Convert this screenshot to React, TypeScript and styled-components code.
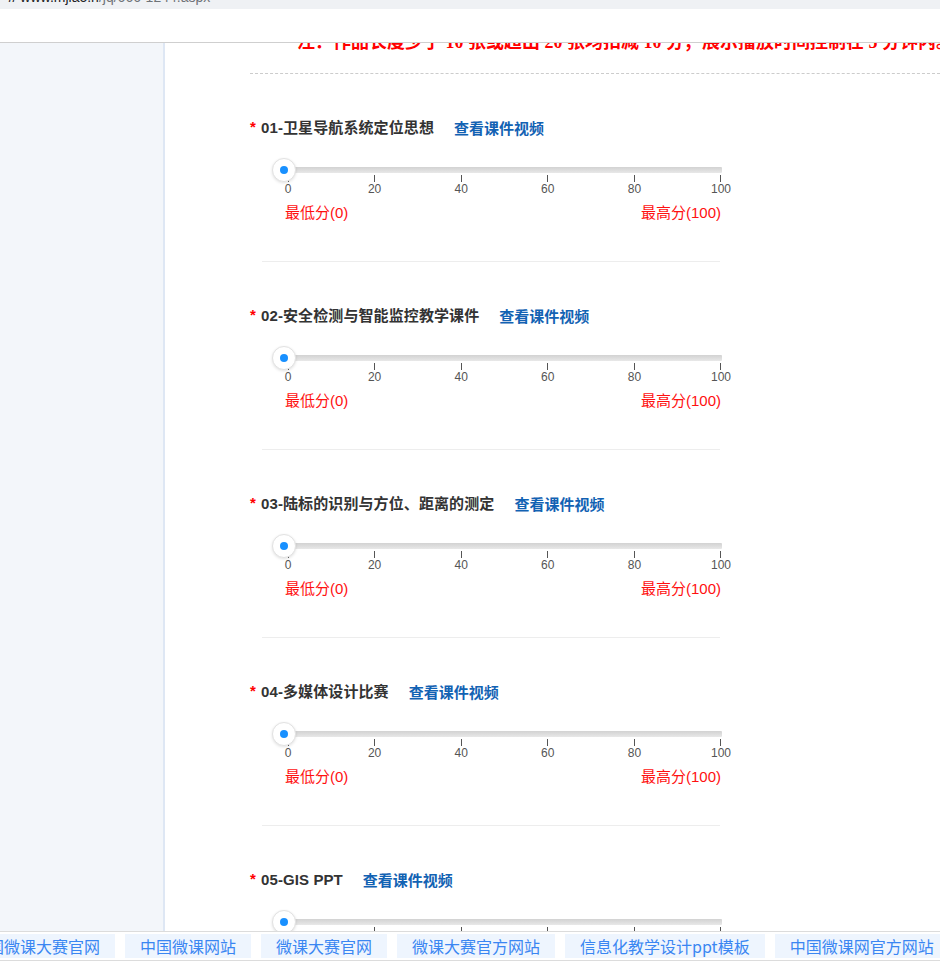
import React from "react";
import styled, { createGlobalStyle } from "styled-components";

const GlobalStyle = createGlobalStyle`
  html, body {
    margin: 0;
    padding: 0;
    background: #fff;
  }
  body {
    font-family: "Liberation Sans", "Noto Sans CJK SC", sans-serif;
    overflow: hidden;
  }
`;

const Page = styled.div`
  height: 968px;
  display: flex;
  flex-direction: column;
  overflow: hidden;
`;

const AddressStrip = styled.div`
  height: 9px;
  background: #eff1f4;
  overflow: hidden;
  font-size: 14px;
  line-height: 16px;
  white-space: nowrap;
`;

const AddressText = styled.div`
  margin-top: -11px;
  padding-left: 4px;
`;

const Domain = styled.span`
  color: #202124;
`;

const UrlPath = styled.span`
  color: #6f7378;
`;

const HeaderBar = styled.div`
  height: 33px;
  background: #fff;
  border-bottom: 1px solid #cfcfcf;
  flex-shrink: 0;
`;

const Body = styled.div`
  flex: 1;
  display: flex;
  min-height: 0;
`;

const Sidebar = styled.aside`
  width: 163px;
  flex-shrink: 0;
  background: #f3f6fa;
  border-right: 2px solid #dee7f4;
`;

const Main = styled.main`
  flex: 1;
  overflow: hidden;
  padding-left: 85px;
`;

const Notice = styled.div`
  margin-top: -13px;
  padding: 0 0 19px 47px;
  border-bottom: 1px dashed #cccccc;
  color: #ff0000;
  font-family: "Liberation Serif", "Noto Sans CJK SC", serif;
  font-weight: bold;
  font-size: 18px;
  line-height: 24px;
  white-space: nowrap;
`;

const Item = styled.section`
  padding-top: 44px;
`;

const TitleRow = styled.div`
  display: flex;
  align-items: center;
  height: 20px;
  line-height: 20px;
  white-space: nowrap;
`;

const Star = styled.span`
  color: #ff0000;
  font-size: 15px;
  font-weight: bold;
  width: 11px;
  margin-top: -3px;
`;

const Title = styled.span`
  color: #333;
  font-family: "Liberation Sans", "Noto Sans CJK SC", sans-serif;
  font-weight: bold;
  font-size: 15px;
  letter-spacing: 0.1px;
`;

const VideoLink = styled.a`
  margin-left: 20px;
  color: #1262b3;
  font-family: "Noto Sans CJK SC", sans-serif;
  font-weight: bold;
  font-size: 15px;
  text-decoration: none;
  cursor: pointer;
`;

const SliderWrap = styled.div`
  margin-top: 20px;
  padding-left: 38px;
`;

const Track = styled.div`
  position: relative;
  width: 434px;
  height: 17px;
  padding-top: 9px;
  box-sizing: border-box;
`;

const Rail = styled.div`
  height: 6px;
  background: linear-gradient(#d2d2d2, #e8e8e8);
  border-radius: 1px;
`;

const Thumb = styled.div`
  position: absolute;
  left: -16px;
  top: 0;
  width: 22px;
  height: 22px;
  border-radius: 50%;
  background: #fff;
  border: 1px solid #e2e2e2;
  box-shadow: 0 1px 3px rgba(0, 0, 0, 0.12);
  display: flex;
  align-items: center;
  justify-content: center;
  z-index: 1;
`;

const Dot = styled.span`
  width: 8px;
  height: 8px;
  border-radius: 50%;
  background: #1890ff;
`;

const TickRow = styled.div`
  width: 433px;
  display: flex;
  justify-content: space-between;
`;

const Tick = styled.div`
  width: 0;
  display: flex;
  flex-direction: column;
  align-items: center;
`;

const TickMark = styled.span`
  width: 1px;
  height: 7px;
  background: #555;
`;

const TickLabel = styled.span`
  font-size: 12px;
  line-height: 14px;
  color: #555;
  white-space: nowrap;
`;

const RangeRow = styled.div`
  margin: 7px 0 0 -3px;
  width: 436px;
  display: flex;
  justify-content: space-between;
  font-size: 15px;
  line-height: 20px;
  color: #ff1010;
`;

const Separator = styled.div`
  margin: 38px 0 0 12px;
  width: 458px;
  height: 1px;
  background: #ededed;
`;

const LinkBar = styled.footer`
  position: fixed;
  left: 0;
  right: 0;
  bottom: 0;
  background: #fff;
  border-top: 1px solid #dcdcdc;
  padding-bottom: 7px;
  z-index: 5;
  overflow: hidden;
`;

const TagRow = styled.div`
  display: flex;
  gap: 10px;
  padding: 2px 0;
  margin-left: -43px;
  border-bottom: 1px solid #dcdcdc;
  white-space: nowrap;
`;

const Tag = styled.a`
  flex-shrink: 0;
  padding: 0 15px;
  height: 24px;
  line-height: 24px;
  background: #eef5fe;
  color: #3a86f2;
  font-family: "Noto Sans CJK SC", sans-serif;
  font-size: 16px;
  text-decoration: none;
`;

const courses = [
  "01-卫星导航系统定位思想",
  "02-安全检测与智能监控教学课件",
  "03-陆标的识别与方位、距离的测定",
  "04-多媒体设计比赛",
  "05-GIS PPT",
];

const ticks = [0, 20, 40, 60, 80, 100];

const links = [
  "中国微课大赛官网",
  "中国微课网站",
  "微课大赛官网",
  "微课大赛官方网站",
  "信息化教学设计ppt模板",
  "中国微课网官方网站",
];

const ScoreSlider: React.FC = () => (
  <SliderWrap>
    <Track>
      <Rail />
      <Thumb>
        <Dot />
      </Thumb>
    </Track>
    <TickRow>
      {ticks.map((t) => (
        <Tick key={t}>
          <TickMark />
          <TickLabel>{t}</TickLabel>
        </Tick>
      ))}
    </TickRow>
    <RangeRow>
      <span>最低分(0)</span>
      <span>最高分(100)</span>
    </RangeRow>
  </SliderWrap>
);

export default function App() {
  return (
    <Page>
      <GlobalStyle />
      <AddressStrip>
        <AddressText>
          <Domain>·// www.mjiao.n</Domain>
          <UrlPath>/jq/666-1244.aspx</UrlPath>
        </AddressText>
      </AddressStrip>
      <HeaderBar />
      <Body>
        <Sidebar />
        <Main>
          <Notice>
            注：作品长度少于 10 张或超出 20 张均扣减 10 分；展示播放时间控制在 5 分钟内。
          </Notice>
          {courses.map((c) => (
            <Item key={c}>
              <TitleRow>
                <Star>*</Star>
                <Title>{c}</Title>
                <VideoLink>查看课件视频</VideoLink>
              </TitleRow>
              <ScoreSlider />
              <Separator />
            </Item>
          ))}
        </Main>
      </Body>
      <LinkBar>
        <TagRow>
          {links.map((l) => (
            <Tag key={l}>{l}</Tag>
          ))}
        </TagRow>
      </LinkBar>
    </Page>
  );
}
